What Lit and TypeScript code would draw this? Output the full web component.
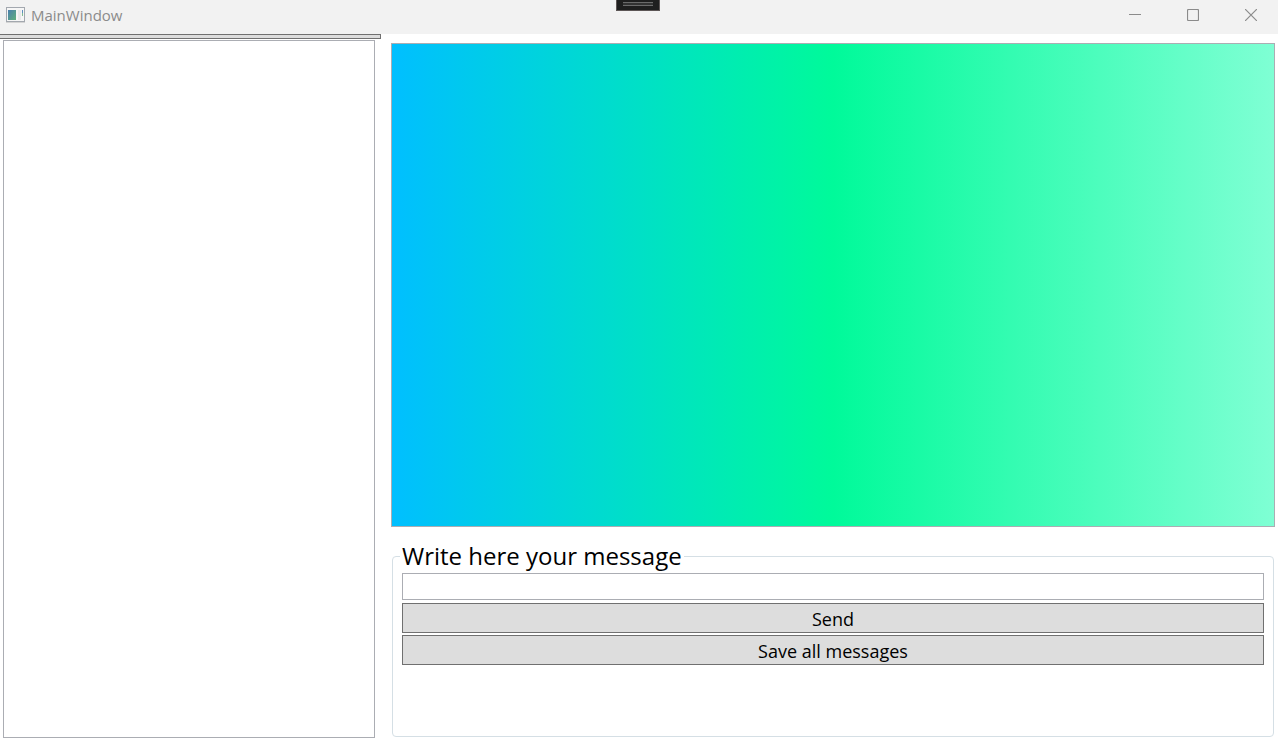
import { LitElement, html, css } from "lit";
import { customElement, state } from "lit/decorators.js";

@customElement("title-bar")
class TitleBar extends LitElement {
  static styles = css`
    :host {
      display: block;
      position: relative;
      flex: none;
      height: 34px;
      background: #f2f2f2;
      color: #8b8b8b;
    }
    .bar {
      display: flex;
      align-items: center;
      height: 30px;
    }
    .icon {
      margin-left: 6px;
      display: block;
    }
    .title {
      flex: 1;
      margin-left: 6px;
      font-size: 15px;
      line-height: 20px;
    }
    .controls {
      display: flex;
      gap: 46px;
      padding-right: 21px;
    }
    .control {
      display: block;
      margin: 0;
      padding: 0;
      border: 0;
      background: none;
      color: inherit;
    }
    .control svg {
      display: block;
    }
    .grip {
      position: absolute;
      top: 0;
      left: 50%;
      transform: translateX(-50%);
      margin-left: -1px;
      display: block;
    }
  `;

  render() {
    return html`
      <div class="bar">
        <svg class="icon" width="19" height="16" viewBox="0 0 19 16" aria-hidden="true">
          <defs>
            <linearGradient id="pane" x1="0" y1="0" x2="1" y2="1">
              <stop offset="0" stop-color="#4a7fae" />
              <stop offset="1" stop-color="#5fb07c" />
            </linearGradient>
          </defs>
          <rect x="0.5" y="0.5" width="18" height="14" fill="#f6f6f6" stroke="#a3a8af" />
          <path d="M0 15.500H19" stroke="#d4d4d4" />
          <rect x="2" y="3" width="8" height="10" fill="url(#pane)" />
          <rect x="12" y="3" width="3" height="10" fill="#e9e9ea" />
          <path d="M16.500 3V6" stroke="#5c8fc0" />
          <path d="M16.500 6V9" stroke="#7fba94" />
        </svg>
        <span class="title">MainWindow</span>
        <div class="controls">
          <button class="control" aria-label="Minimize">
            <svg width="12" height="12" viewBox="0 0 12 12"><path d="M0 5.500H12" stroke="#8b8b8b" /></svg>
          </button>
          <button class="control" aria-label="Maximize">
            <svg width="12" height="12" viewBox="0 0 12 12">
              <rect x="0.500" y="0.500" width="11" height="11" rx="1" fill="none" stroke="#8b8b8b" stroke-width="1.200" />
            </svg>
          </button>
          <button class="control" aria-label="Close">
            <svg width="12" height="12" viewBox="0 0 12 12">
              <path d="M0 0L12 12M12 0L0 12" stroke="#8b8b8b" stroke-width="1.200" />
            </svg>
          </button>
        </div>
      </div>
      <svg class="grip" width="44" height="11" viewBox="0 0 44 11" aria-hidden="true">
        <rect width="44" height="11" fill="#5c5656" />
        <rect x="1" width="42" height="10" fill="#1f1f1f" />
        <path d="M7 2.500H37M7 5.500H37" stroke="#6b6b6b" />
        <path d="M7 3.500H37M7 4.500H37" stroke="#333" />
      </svg>
    `;
  }
}

@customElement("app-root")
class AppRoot extends LitElement {
  static styles = css`
    :host {
      display: flex;
      flex-direction: column;
      height: 100vh;
      background: #fff;
      color: #000;
      font-family: "Segoe UI", "Open Sans", "Noto Sans", sans-serif;
    }
    * {
      box-sizing: border-box;
    }
    .content {
      flex: 1;
      min-height: 0;
      display: grid;
      grid-template-columns: 381fr 897fr;
    }
    .side {
      display: flex;
      flex-direction: column;
      min-height: 0;
    }
    .strip {
      flex: none;
      height: 5px;
      margin: 0;
      padding: 0;
      border: 1px solid #707070;
      border-left: 0;
      background: #ddd;
    }
    .list {
      flex: 1;
      margin: 1px 6px 2px 3px;
      padding: 0;
      border: 1px solid #abadb3;
      list-style: none;
      overflow: auto;
    }
    .main {
      display: flex;
      flex-direction: column;
      min-height: 0;
      padding: 9px 3px 3px 10px;
    }
    .board {
      flex: 1;
      border: 1px solid #abadb3;
      background: linear-gradient(90deg, #00bfff, #00fa9a 50%, #7fffd4);
    }
    .form {
      flex: none;
      display: block;
      height: 197px;
      min-width: 0;
      margin: 13px 1px 0 1px;
      padding: 0 9px;
      border: 1px solid #d5dfe5;
      border-radius: 4px;
    }
    .legend {
      margin-left: -2px;
      padding: 0 2px 2px;
      font-size: 24px;
      line-height: 31px;
    }
    .fields {
      display: grid;
      gap: 2px;
    }
    .text {
      width: 100%;
      height: 27px;
      margin: 0 0 1px;
      padding: 0 4px;
      border: 1px solid #abadb3;
      border-radius: 0;
      background: #fff;
      font: inherit;
      font-size: 18px;
      outline: none;
    }
    .action {
      height: 30px;
      margin: 0;
      padding: 2px 0 0;
      border: 1px solid #707070;
      border-radius: 0;
      background: #ddd;
      color: #000;
      font: inherit;
      font-size: 18px;
      line-height: 26px;
    }
  `;

  @state() private messages: string[] = [];

  private send() {
    const box = this.renderRoot.querySelector<HTMLInputElement>("#message");
    if (!box || !box.value) return;
    this.messages = [...this.messages, box.value];
    box.value = "";
  }

  render() {
    return html`
      <title-bar></title-bar>
      <div class="content">
        <div class="side">
          <button class="strip" aria-label="Messages"></button>
          <ul class="list">
            ${this.messages.map((m) => html`<li>${m}</li>`)}
          </ul>
        </div>
        <main class="main">
          <div class="board"></div>
          <fieldset class="form">
            <legend class="legend"><label for="message">Write here your message</label></legend>
            <div class="fields">
              <input class="text" id="message" type="text" />
              <button class="action" @click=${this.send}>Send</button>
              <button class="action">Save all messages</button>
            </div>
          </fieldset>
        </main>
      </div>
    `;
  }
}
